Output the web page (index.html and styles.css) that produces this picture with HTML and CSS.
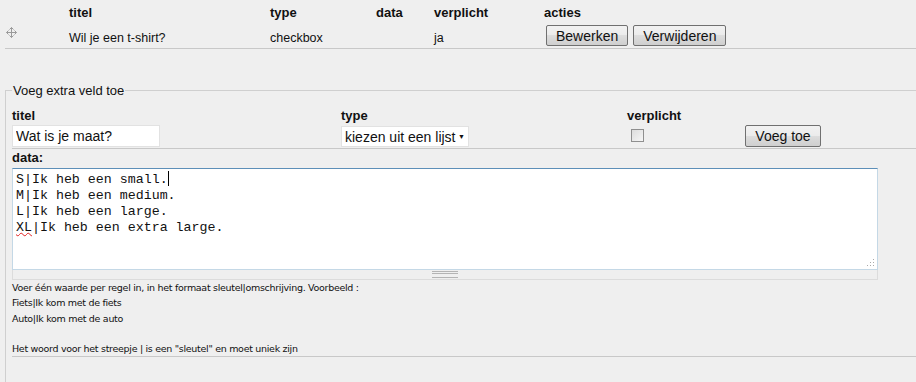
FILE: index.html
```html
<!DOCTYPE html>
<html lang="nl">

<head>
  <meta charset="UTF-8">
  <title>Extra velden</title>
  <link rel="stylesheet" href="styles.css">
</head>

<body>
  <div class="fields">
    <div class="field-row field-head">
      <span></span>
      <span>titel</span>
      <span>type</span>
      <span>data</span>
      <span>verplicht</span>
      <span>acties</span>
    </div>
    <div class="field-row field-item">
      <span class="drag">
        <svg width="11" height="11" viewBox="0 0 11 11">
          <path d="M5.5 0.5v10M0.5 5.5h10" stroke="#9a9a9a" stroke-width="1" fill="none" />
          <path d="M3.5 2.5l2-2 2 2M3.5 8.5l2 2 2-2M2.5 3.5l-2 2 2 2M8.5 3.5l2 2-2 2" stroke="#9a9a9a" stroke-width="1" fill="none" />
        </svg>
      </span>
      <span class="cell">Wil je een t-shirt?</span>
      <span class="cell">checkbox</span>
      <span></span>
      <span class="cell">ja</span>
      <span class="actions">
        <button class="btn">Bewerken</button>
        <button class="btn">Verwijderen</button>
      </span>
    </div>
  </div>

  <fieldset class="new-field">
    <legend>Voeg extra veld toe</legend>
    <div class="form-row">
      <div class="form-group">
        <label>titel</label>
        <input type="text" class="text-input" value="Wat is je maat?">
      </div>
      <div class="form-group">
        <label>type</label>
        <span class="select">kiezen uit een lijst <span class="caret">&#9660;</span></span>
      </div>
      <div class="form-group">
        <label>verplicht</label>
        <span class="check"></span>
      </div>
      <div class="form-group">
        <label>&nbsp;</label>
        <button class="btn btn-add">Voeg toe</button>
      </div>
    </div>

    <div class="data-block">
      <label>data:</label>
      <div class="data-box">
        <div class="data-text">S|Ik heb een small.<span class="cursor"></span>
M|Ik heb een medium.
L|Ik heb een large.
<span class="typo">XL</span>|Ik heb een extra large.</div>
        <span class="resize"></span>
      </div>
      <div class="grip"><span></span></div>
      <div class="help">
        <p>Voer één waarde per regel in, in het formaat sleutel|omschrijving. Voorbeeld :</p>
        <p>Fiets|Ik kom met de fiets</p>
        <p>Auto|Ik kom met de auto</p>
        <p>&nbsp;</p>
        <p>Het woord voor het streepje | is een "sleutel" en moet uniek zijn</p>
      </div>
    </div>
  </fieldset>
</body>

</html>
```

FILE: styles.css
```css
body {
  margin: 0;
  background-color: #efefef;
  font-family: "DejaVu Sans", Verdana, sans-serif;
  font-size: 12px;
  color: #111;
}

.fields {
  margin: 0 0 0 5px;
  padding-top: 4px;
  border-bottom: 1px solid #c8c8c8;
}

.field-row {
  display: grid;
  grid-template-columns: 64px 201px 106px 58px 110px 1fr;
  align-items: center;
  height: 17px;
  font-family: "Liberation Sans", Arial, sans-serif;
  font-size: 12.5px;
}

.field-item {
  height: 25px;
  padding-top: 2px;
}

.field-item .cell {
  padding-top: 4px;
}

.field-head {
  font-weight: bold;
  font-size: 13px;
}

.drag {
  display: flex;
  padding: 0 0 6px 1px;
}

.actions {
  display: flex;
  gap: 5px;
  padding-left: 2px;
}

.btn {
  font-family: "Liberation Sans", Arial, sans-serif;
  font-size: 14px;
  height: 21px;
  padding: 0 9px;
  border: 1px solid #707070;
  border-radius: 2px;
  background: linear-gradient(#f2f2f2, #ebebeb 50%, #dddddd 50%, #cfcfcf);
  color: #111;
}

.new-field {
  margin: 34px 0 0 5px;
  padding: 10px 0 0 6px;
  border: 1px solid #cfcfcf;
  border-right: none;
  border-bottom: none;
  height: 300px;
}

.new-field legend {
  padding: 0 1px;
  margin-left: 0;
  font-family: "Liberation Sans", Arial, sans-serif;
  font-size: 13px;
}

.form-row {
  display: grid;
  grid-template-columns: 329px 286px 118px 1fr;
  height: 40px;
  border-bottom: 1px solid #c8c8c8;
}

.form-group {
  display: flex;
  flex-direction: column;
  align-items: flex-start;
}

.form-group label,
.data-block label {
  font-family: "Liberation Sans", Arial, sans-serif;
  font-weight: bold;
  font-size: 13px;
  height: 16px;
  line-height: 16px;
}

.text-input {
  box-sizing: border-box;
  width: 148px;
  height: 22px;
  margin: 1px 0 0;
  padding: 0 3px;
  border: 1px solid #e2e2e2;
  font-family: "Liberation Sans", Arial, sans-serif;
  font-size: 14px;
  color: #111;
}

.select {
  box-sizing: border-box;
  display: flex;
  align-items: center;
  width: 128px;
  height: 21px;
  margin-top: 2px;
  padding: 0 3px;
  background-color: #fff;
  border: 1px solid #e2e2e2;
  font-family: "Liberation Sans", Arial, sans-serif;
  font-size: 14px;
}

.caret {
  font-size: 7px;
  margin-left: auto;
}

.check {
  box-sizing: border-box;
  width: 13px;
  height: 13px;
  margin: 5px 0 0 4px;
  border: 1px solid #8f8f8f;
  background: linear-gradient(135deg, #dcdcdc, #f6f6f6);
}

.btn-add {
  width: 76px;
  height: 22px;
  margin-top: 1px;
  padding: 0;
}

.data-block {
  padding-top: 1px;
}

.data-box {
  position: relative;
  box-sizing: border-box;
  width: 866px;
  height: 102px;
  margin-top: 2px;
  background-color: #fff;
  border: 1px solid #c4d8e6;
  border-top-color: #5d8fb8;
}

.data-text {
  white-space: pre;
  padding: 2px 3px;
  font-family: "Liberation Mono", "Courier New", monospace;
  font-size: 13.3px;
  line-height: 16px;
  color: #111;
}

.cursor {
  display: inline-block;
  width: 1px;
  height: 15px;
  background-color: #000;
  vertical-align: -3px;
}

.typo {
  text-decoration: underline wavy #e02020;
  text-decoration-thickness: 1px;
}

.resize {
  position: absolute;
  right: 3px;
  bottom: 3px;
  width: 8px;
  height: 8px;
  background: radial-gradient(circle, #aaa 0.8px, transparent 1px) 0 0 / 3px 3px;
  clip-path: polygon(100% 0, 100% 100%, 0 100%);
}

.grip {
  box-sizing: border-box;
  display: flex;
  justify-content: center;
  align-items: center;
  width: 866px;
  height: 10px;
  border: 1px solid #dcdcdc;
  border-top: none;
}

.grip span {
  width: 26px;
  height: 5px;
  border-top: 1px solid #b4b4b4;
  border-bottom: 1px solid #b4b4b4;
  background: linear-gradient(transparent 1px, #b4b4b4 1px, #b4b4b4 2px, transparent 2px);
}

.help {
  margin-top: 0;
  border-bottom: 1px solid #c8c8c8;
  font-family: "DejaVu Sans", Verdana, sans-serif;
  font-size: 9.5px;
  letter-spacing: -0.3px;
}

.help p {
  margin: 0;
  line-height: 15.3px;
}
```
